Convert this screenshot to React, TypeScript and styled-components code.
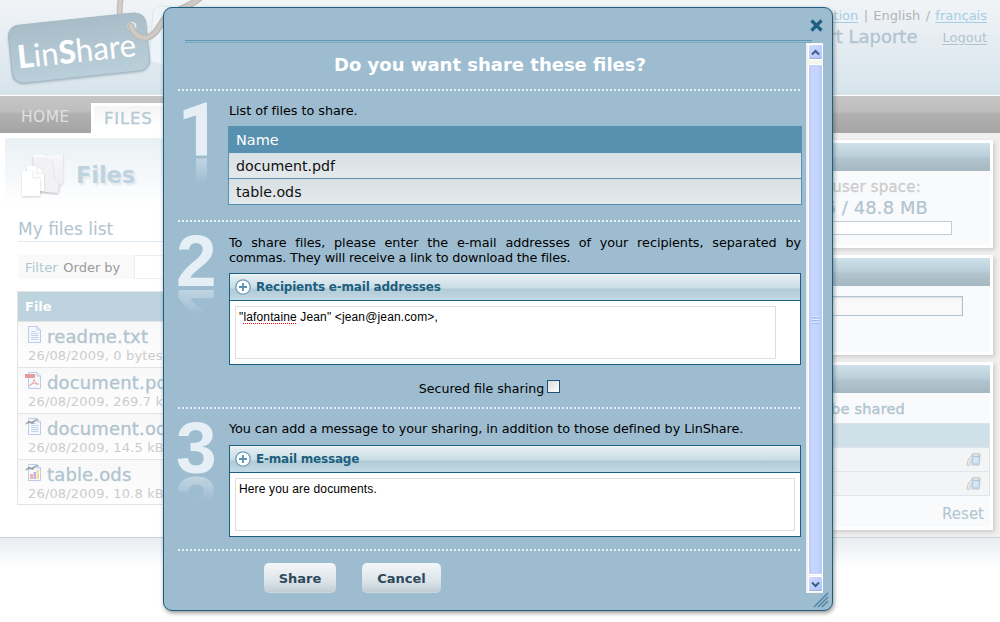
import React from "react";
import styled, { createGlobalStyle } from "styled-components";

const Global = createGlobalStyle`
  * { box-sizing: border-box; }
  body { margin: 0; background: #fff; font-family: "DejaVu Sans", sans-serif; font-size: 13px; overflow: hidden; }
`;

const Page = styled.div`position: relative; width: 1000px; height: 622px; overflow: hidden; background: #fff;`;

/* ---------- Page behind the dialog ---------- */
const Header = styled.header`
  height: 96px; display: flex; justify-content: space-between;
  background: linear-gradient(#f1f4f7, #d7e4ec); border-bottom: 1px solid #fff;
`;
const Account = styled.div`
  display: flex; flex-direction: column; align-items: flex-end; padding: 8px 13px 0 0; white-space: nowrap;
`;
const Languages = styled.div`height: 17px; line-height: 16px; color: #b4b4b4; font-size: 13px; word-spacing: 1.2px;`;
const Link = styled.span<{ $color?: string }>`
  color: ${(p) => p.$color || "#a5cde4"}; text-decoration: underline; text-underline-offset: 2px; text-decoration-thickness: 1px;
`;
const UserLine = styled.div`display: flex; gap: 25px; align-items: center; height: 24px; line-height: 29px;`;
const UserName = styled.span`font-size: 18px; line-height: 24px; color: #b0c4cf; -webkit-text-stroke: 0.3px #b0c4cf;`;
const Nav = styled.nav`
  height: 37px; display: flex; align-items: flex-end;
  background: linear-gradient(#c6c6c6 0, #bebebe 16px, #b2b2b2 17px, #a4a4a4 37px);
`;
const NavItem = styled.div<{ $active?: boolean }>`
  font-size: ${(p) => (p.$active ? 16.5 : 15.5)}px; letter-spacing: ${(p) => (p.$active ? 0.8 : 0.4)}px;
  height: ${(p) => (p.$active ? 30 : 37)}px; line-height: ${(p) => (p.$active ? 25 : 43)}px;
  width: ${(p) => (p.$active ? 110 : 91)}px; padding-left: ${(p) => (p.$active ? 10 : 21)}px;
  color: ${(p) => (p.$active ? "#b3cad6" : "#e0e0e0")};
  -webkit-text-stroke: ${(p) => (p.$active ? "0.3px #b3cad6" : "0")};
  border: ${(p) => (p.$active ? "3px solid #fff" : "0")}; border-bottom: 0;
  background: ${(p) => (p.$active ? "linear-gradient(#f4f4f4, #fff 20px)" : "none")};
`;
const Body = styled.div`display: flex; height: 404px;`;
const Main = styled.main`
  width: 740px; margin: 5px 0 0 5px; padding: 10px 13px 0 12px; flex: none;
  background: linear-gradient(#e9f0f4, #fff 68px);
`;
const PageHeading = styled.div`display: flex; align-items: center; height: 54px; gap: 11px; padding-left: 4px;`;
const PageTitle = styled.div`font-size: 22.5px; font-weight: bold; color: #bdd3df; text-shadow: 2px 2px 2px #e2e7ec; letter-spacing: -0.1px;`;
const SubTitle = styled.div`
  margin: 8px 0 0 1px; height: 32px; line-height: 38px; font-size: 17px; color: #b0c4cf; border-bottom: 1px solid #dfe9f2;
`;
const FilterBar = styled.div`display: flex; margin: 13px 0 0 1px; height: 24px; line-height: 25px; background: #f9f9f9; color: #999; padding-left: 7px; gap: 5.5px;`;
const FilterLabel = styled.span`color: #b0c8d4; letter-spacing: 0.1px;`;
const FilterField = styled.span`margin-left: 8px; width: 200px; background: #fff; border: 1px solid #eee;`;
const FileTable = styled.div`margin-top: 12px; border: 1px solid #e4e4e4;`;
const FileHead = styled.div`height: 29px; line-height: 30px; padding-left: 7px; background: #bdd3de; color: #fff; font-weight: bold; font-size: 13px;`;
const FileRow = styled.div`
  height: 46px; border-top: 1px solid #e4e4e4; background: linear-gradient(#f8f8f8, #fefefe); padding-left: 7px;
  &:last-child { height: 45px; }
`;
const FileName = styled.div`
  display: flex; align-items: center; gap: 5px; height: 28px; font-size: 18px; color: #b0c4cf; letter-spacing: 0.15px;
  -webkit-text-stroke: 0.3px #b0c4cf;
  svg { margin-top: -3px; }
`;
const FileMeta = styled.div`padding-left: 3px; height: 15px; line-height: 12px; font-size: 13px; letter-spacing: 0.17px; color: #ccc; white-space: nowrap;`;

const Sidebar = styled.aside`flex: 1; background: #f0f0f0; padding: 7px 7px 0 0; display: flex; flex-direction: column; gap: 7px;`;
const Card = styled.section<{ $h: number }>`
  height: ${(p) => p.$h}px; border: 3px solid #fff; background: #f8fafc; box-shadow: 2px 2px 4px #ccc; white-space: nowrap;
`;
const CardHead = styled.div`height: 28px; background: linear-gradient(#cfe1e9 0, #b9ced9 14px, #b3c6d0 15px, #a5b8c2 28px);`;
const Quota = styled.div`display: flex; flex-direction: column; align-items: flex-end;`;
const QuotaLabel = styled.div`height: 25px; line-height: 32px; padding-right: 69px; font-size: 15px; color: #ccc; letter-spacing: 0.2px; -webkit-text-stroke: 0.3px #ccc;`;
const QuotaValue = styled.div`height: 25px; line-height: 24px; padding-right: 62px; font-size: 17.8px; color: #b0c4cf; letter-spacing: 0.2px; -webkit-text-stroke: 0.2px #b0c4cf;`;
const Meter = styled.div`height: 14px; width: 150px; margin-right: 38px; border: 1px solid #bdd0da; background: #fff;`;
const SideField = styled.div`margin: 10px 27px 0 auto; width: 150px; height: 20px; border: 1px solid #b0c4cf; background: #f9f9f9; box-shadow: inset 0 1px 2px #ddd;`;
const ShareTitle = styled.div`height: 30px; line-height: 32px; padding-right: 85px; text-align: right; color: #b0c4cf; font-size: 14.5px; letter-spacing: 0.2px; -webkit-text-stroke: 0.4px #b0c4cf;`;
const ShareHead = styled.div`height: 25px; background: #d0e0e8; border: 1px solid #dde3e6;`;
const ShareRow = styled.div`height: 24px; background: #f2f4f5; border: 1px solid #e2e4e6; border-top: 0; display: flex; justify-content: flex-end; align-items: center; padding-right: 7px;`;
const Reset = styled.div`height: 34px; line-height: 36px; padding-right: 6px; text-align: right; color: #b0c4cf; font-size: 15px;`;
const Footer = styled.footer`height: 30px; border-top: 1px solid #ccd0d4; background: linear-gradient(#e8edf1, #fff);`;

/* ---------- Dialog ---------- */
const Dialog = styled.div`
  position: absolute; left: 163px; top: 7px; width: 670px; height: 604px; z-index: 2;
  background: #9dbcd0; border: 1px solid #1d5f80; border-radius: 9px;
  box-shadow: 1px 2px 4px rgba(60, 60, 60, 0.55); display: flex; flex-direction: column;
`;
const DialogBar = styled.div`height: 32px; display: flex; justify-content: flex-end; padding: 11px 9px 0 0;`;
const DoubleRule = styled.div`height: 3px; margin: 0 20px 0 21px; border-top: 1px solid #5f95b5; border-bottom: 1px solid #7ba7c1;`;
const Scroller = styled.div`display: flex; height: 550px; padding-left: 14px;`;
const Content = styled.div`width: 624px; display: flex; flex-direction: column;`;
const Title = styled.h1`margin: 0; height: 46px; line-height: 44px; text-align: center; color: #fff; font-size: 18px; font-weight: bold;`;
const Dots = styled.div`height: 2px; margin-right: 1px; flex: none; background: repeating-linear-gradient(90deg, #e6eff5 0 2px, transparent 2px 4px);`;
const Step = styled.section<{ $h: number }>`height: ${(p) => p.$h}px; display: flex; padding-top: 13px; padding-right: 1px;`;
const Digit = styled.div<{ $plain?: boolean }>`
  width: 36px; margin-right: 15px; height: 52px; line-height: 52px; flex: none;
  font-family: ${(p) => (p.$plain ? "Roboto" : '"Liberation Sans"')}, sans-serif; font-weight: bold; font-size: 73px; color: #e6eff5;
  text-indent: ${(p) => (p.$plain ? 0 : -2)}px;
  -webkit-text-stroke: ${(p) => (p.$plain ? 0.8 : 0)}px #e6eff5;
  -webkit-box-reflect: below 2px linear-gradient(transparent 50%, rgba(0, 0, 0, 0.5));
`;
const StepBody = styled.div`flex: 1; min-width: 0;`;
const StepText = styled.p<{ $h: number; $ls: number; $up?: boolean }>`
  margin: ${(p) => (p.$up ? -1 : 0)}px 0 0; height: ${(p) => p.$h}px; line-height: 15px; font-size: 12.8px;
  letter-spacing: ${(p) => p.$ls}px; color: #000;
`;
const FullLine = styled.span`display: block; text-align-last: justify; letter-spacing: -0.04px;`;
const Names = styled.div`margin: 0 -1px; border: 1px solid #5890b0; border-top: 0; font-size: 14.2px;`;
const NamesHead = styled.div`height: 27px; line-height: 28px; padding-left: 7px; color: #fff; background: #5890b0; font-size: 14.5px;`;
const NamesRow = styled.div`
  height: 25px; line-height: 26px; padding-left: 7px; color: #111; background: linear-gradient(#d8e0e3, #e4e9ec);
  & + & { height: 26px; border-top: 1px solid #5890b0; }
`;
const Panel = styled.div`height: 92px; border: 1px solid #1d5f80; background: #fff;`;
const PanelHead = styled.div`
  height: 27px; display: flex; align-items: center; gap: 5px; padding-left: 5px; border-bottom: 1px solid #1d5f80;
  background: linear-gradient(#fff 0, #e6eff3 1px, #c9dce5 14px, #b0cad6 15px, #c3d9e3 26px);
  color: #1d5f80; font-weight: bold; font-size: 12px; letter-spacing: -0.2px;
`;
const Area = styled.div<{ $w: number }>`
  margin: 5px; width: ${(p) => p.$w}px; height: 53px; border: 1px solid #ddd; padding: 3px; line-height: 14px;
  font-family: "Liberation Sans", sans-serif; font-size: 12px; letter-spacing: 0.14px; color: #000;
`;
const Misspelt = styled.span`text-decoration: underline dotted #f00 1px; text-underline-offset: 2px; text-decoration-skip-ink: none;`;
const Secured = styled.label`
  display: flex; justify-content: center; align-items: center; height: 43px; gap: 3px; padding: 3px 51px 0 0; font-size: 12.6px;
`;
const Check = styled.span`width: 13px; height: 13px; margin-top: -4px; border: 1px solid #1d5180; background: linear-gradient(135deg, #dcdcd7, #fff);`;
const Actions = styled.div`display: flex; gap: 26px; padding: 12px 0 0 86px;`;
const Button = styled.button<{ $w: number }>`
  width: ${(p) => p.$w}px; height: 30px; padding: 0; border: 0; border-radius: 5px; color: #2c4a5a;
  background: linear-gradient(#f4f7f9, #dce4e9 60%, #bccad2); font: bold 13px "DejaVu Sans", sans-serif;
  box-shadow: inset 0 -1px #cbd5da;
`;
const Track = styled.div`width: 17px; height: 550px; margin-left: 4px; padding: 1px; border-left: 1px solid #eeeee8; background: #f5f5f0; display: flex; flex-direction: column; align-items: center;`;
const Arrow = styled.div`width: 15px; height: 16px; flex: none; border: 1px solid #fff; border-radius: 2px; background: linear-gradient(135deg, #d0dcff, #b0c4f8); box-shadow: inset 0 -1px #9cb0e0; display: flex; align-items: center; justify-content: center;`;
const Thumb = styled.div`width: 15px; height: 511px; margin: 4px 0 1px; border: 1px solid #fff; border-radius: 2px; background: linear-gradient(90deg, #b8c8f4 0, #c8d6ff 3px, #c3d3fd 9px, #b4c8f8 13px); display: flex; align-items: center; justify-content: center;`;
const Grip = styled.div`width: 7px; height: 8px; background: repeating-linear-gradient(#dfe9ff 0 1px, #9cbafa 1px 2px, #c3d3fd 2px 3px);`;
const Resize = styled.svg`position: absolute; right: 3px; bottom: 2px;`;

const ROPE = "M131 26C133 34 140 39 147 37.500C157 35 159 25 165 18C172 10 190 8 201 -3";

const Logo = () => (
  <svg width="240" height="95" viewBox="0 0 240 95">
    <defs>
      <linearGradient id="tag" x1="0" y1="0" x2="0" y2="1"><stop offset="0" stopColor="#a9bdc8" /><stop offset="1" stopColor="#b9cfda" /></linearGradient>
      <filter id="soft" x="-10%" y="-10%" width="120%" height="130%"><feDropShadow dx="0" dy="1" stdDeviation="1.2" floodColor="#8c9aa3" floodOpacity=".6" /></filter>
    </defs>
    <path d="M153 11Q155 5 165 6L190 12V70L155 63Q149 62 150 55Z" fill="#edf5fa" stroke="#dce8ef" />
    <path d="M121 -2Q119 6 120 14" fill="none" stroke="#c3bfb9" strokeWidth="6" />
    <path d="M121 -2Q119 6 120 14" fill="none" stroke="#d3cec8" strokeWidth="3" />
    <g filter="url(#soft)"><rect x="10" y="19" width="138" height="58" rx="11" transform="rotate(-6 79 48)" fill="url(#tag)" stroke="#a5bac5" /></g>
    <circle cx="132" cy="26.500" r="4.500" fill="#e2e9ed" />
    <path d={ROPE} fill="none" stroke="#bdb9b3" strokeWidth="6.500" strokeLinecap="round" />
    <path d={ROPE} fill="none" stroke="#cfcac4" strokeWidth="4" strokeLinecap="round" />
    <text transform="translate(18.500 68.5) rotate(-6)" fill="#fff" fontFamily="Lato, sans-serif" fontSize="32" textLength="119" lengthAdjust="spacingAndGlyphs">
      <tspan fontWeight="900">L</tspan>in<tspan fontWeight="900">S</tspan>hare
    </text>
  </svg>
);

const FolderIcon = () => (
  <svg width="44" height="48" viewBox="0 0 44 48">
    <defs>
      <linearGradient id="fold" x1="0" y1="0" x2="1" y2="1"><stop offset="0" stopColor="#fff" /><stop offset="1" stopColor="#ecebf1" /></linearGradient>
      <filter id="iconShadow" x="-20%" y="-20%" width="140%" height="140%"><feDropShadow dx="0" dy="1" stdDeviation=".8" floodColor="#aaa8b4" floodOpacity=".55" /></filter>
    </defs>
    <g filter="url(#iconShadow)"><path d="M12 4L22 3L24 5L42 2V32L39 34L37 42L15 40Z" fill="url(#fold)" /></g>
    <g filter="url(#iconShadow)"><path d="M12 6L31 8L33 28L37 31V42L15 40Z" fill="#f2f1f6" /></g>
    <g filter="url(#iconShadow)"><path d="M6 15H16L23 22V40H6Z" fill="#fff" /></g>
    <g filter="url(#iconShadow)"><path d="M1 20H12L19 27V45H1Z" fill="#fff" /></g>
    <path d="M12 20V27H19M16 15V22H23" fill="none" stroke="#e8e8ea" />
  </svg>
);

type Kind = "txt" | "pdf" | "odt" | "ods";
const FileIcon = ({ kind }: { kind: Kind }) => (
  <svg width="17" height="17" viewBox="0 0 17 17" fill="none">
    <path d="M3.5 .5H12L15.5 4V16.5H3.5Z" fill="#f5f9fe" stroke="#bccbe8" />
    <path d="M12 .5V4H15.5" stroke="#bccbe8" />
    {(kind === "txt" || kind === "odt") && <path d="M6 5.5H11M6 7.5H13.5M6 9.5H13.5M6 11.5H13.5M6 13.5H13.5" stroke="#c2d4ec" />}
    {kind === "pdf" && (<><path d="M0 2H10V6H0Z" fill="#e99a9a" /><path d="M9 7C9 10 7 12 4 14M9 8C10 11 12 12 14 12M5 13C8 11 11 11 13 13" stroke="#eea5a5" /></>)}
    {kind === "ods" && (<><path d="M5 10H8V15H5Z" fill="#efb5aa" /><path d="M8.500 8H11V15H8.500Z" fill="#c7b0e0" /><path d="M11.500 6H14V15H11.500Z" fill="#f5df94" /></>)}
    {(kind === "odt" || kind === "ods") && <path d="M.5 6Q3 2 7 4Q9 1.500 13 1.500Q9 3 8 5.500Q4 4 .5 6Z" fill="#999" stroke="#999" strokeWidth=".6" />}
  </svg>
);

const TrashIcon = () => (
  <svg width="16" height="14" viewBox="0 0 16 14" fill="none">
    <path d="M6 2L14 2L13 12H6Z" fill="#c5d9f3" stroke="#b4c5da" />
    <ellipse cx="10" cy="2" rx="4.500" ry="1.300" fill="#eee" stroke="#bbb" />
    <path d="M5 3Q1 7 1 12L3 13L6 5" fill="#eee" stroke="#c9c9c9" />
    <circle cx="10" cy="7" r="1.800" stroke="#f0f6ff" />
  </svg>
);

const PlusIcon = () => (
  <svg width="16" height="16" viewBox="0 0 16 16">
    <circle cx="8" cy="8" r="7.200" fill="#fff" stroke="#6b9cb8" strokeWidth="1.300" />
    <path d="M8 4V12M4 8H12" stroke="#5890b0" strokeWidth="1.800" />
  </svg>
);

const Chevron = ({ down }: { down?: boolean }) => (
  <svg width="9" height="7" viewBox="0 0 9 7"><path d={down ? "M1 1.500L4.500 5L8 1.500" : "M1 5.500L4.500 2L8 5.500"} fill="none" stroke="#435a8c" strokeWidth="2" /></svg>
);

const files: { name: string; meta: string; kind: Kind }[] = [
  { name: "readme.txt", meta: "26/08/2009, 0 bytes", kind: "txt" },
  { name: "document.pdf", meta: "26/08/2009, 269.7 kB", kind: "pdf" },
  { name: "document.odt", meta: "26/08/2009, 14.5 kB", kind: "odt" },
  { name: "table.ods", meta: "26/08/2009, 10.8 kB", kind: "ods" },
];

export default function App() {
  return (
    <Page>
      <Global />
      <Header>
        <Logo />
        <Account>
          <Languages><Link>Administration</Link> | English / <Link>français</Link></Languages>
          <UserLine><UserName>Robert Laporte</UserName><Link $color="#b0c4cf">Logout</Link></UserLine>
        </Account>
      </Header>
      <Nav><NavItem>HOME</NavItem><NavItem $active>FILES</NavItem></Nav>
      <Body>
        <Main>
          <PageHeading><FolderIcon /><PageTitle>Files</PageTitle></PageHeading>
          <SubTitle>My files list</SubTitle>
          <FilterBar><FilterLabel>Filter</FilterLabel><span>Order by</span><FilterField /></FilterBar>
          <FileTable>
            <FileHead>File</FileHead>
            {files.map((f) => (
              <FileRow key={f.name}>
                <FileName><FileIcon kind={f.kind} />{f.name}</FileName>
                <FileMeta>{f.meta}</FileMeta>
              </FileRow>
            ))}
          </FileTable>
        </Main>
        <Sidebar>
          <Card $h={108}>
            <CardHead />
            <Quota><QuotaLabel>Used user space:</QuotaLabel><QuotaValue>0.6 / 48.8 MB</QuotaValue><Meter /></Quota>
          </Card>
          <Card $h={100}><CardHead /><SideField /></Card>
          <Card $h={168}>
            <CardHead />
            <ShareTitle>Files to be shared</ShareTitle>
            <ShareHead />
            <ShareRow><TrashIcon /></ShareRow>
            <ShareRow><TrashIcon /></ShareRow>
            <Reset>Reset</Reset>
          </Card>
        </Sidebar>
      </Body>
      <Footer />

      <Dialog>
        <DialogBar>
          <svg width="13" height="13" viewBox="0 0 13 13"><path d="M1.500 1.500L11.500 11.500M11.500 1.500L1.500 11.500" stroke="#1d5f80" strokeWidth="3.200" /></svg>
        </DialogBar>
        <DoubleRule />
        <Scroller>
          <Content>
            <Title>Do you want share these files?</Title>
            <Dots />
            <Step $h={129}>
              <Digit $plain>1</Digit>
              <StepBody>
                <StepText $h={23} $ls={-0.04} $up>List of files to share.</StepText>
                <Names>
                  <NamesHead>Name</NamesHead>
                  <NamesRow>document.pdf</NamesRow>
                  <NamesRow>table.ods</NamesRow>
                </Names>
              </StepBody>
            </Step>
            <Dots />
            <Step $h={185}>
              <Digit>2</Digit>
              <StepBody>
                <StepText $h={38} $ls={-0.17}>
                  <FullLine>To share files, please enter the e-mail addresses of your recipients, separated by</FullLine>{" "}
                  commas. They will receive a link to download the files.
                </StepText>
                <Panel>
                  <PanelHead><PlusIcon />Recipients e-mail addresses</PanelHead>
                  <Area $w={541}>"<Misspelt>lafontaine</Misspelt> Jean" &lt;jean@jean.com&gt;,</Area>
                </Panel>
                <Secured>Secured file sharing<Check /></Secured>
              </StepBody>
            </Step>
            <Dots />
            <Step $h={140}>
              <Digit>3</Digit>
              <StepBody>
                <StepText $h={24} $ls={-0.08} $up>You can add a message to your sharing, in addition to those defined by LinShare.</StepText>
                <Panel>
                  <PanelHead><PlusIcon />E-mail message</PanelHead>
                  <Area $w={560}>Here you are documents.</Area>
                </Panel>
              </StepBody>
            </Step>
            <Dots />
            <Actions><Button $w={72}>Share</Button><Button $w={79}>Cancel</Button></Actions>
          </Content>
          <Track>
            <Arrow><Chevron /></Arrow>
            <Thumb><Grip /></Thumb>
            <Arrow><Chevron down /></Arrow>
          </Track>
        </Scroller>
        <Resize width="16" height="16" viewBox="0 0 16 16"><path d="M1 15L15 1M5 15L15 5M9 15L15 9" stroke="#4f86a5" strokeWidth="1.500" /></Resize>
      </Dialog>
    </Page>
  );
}
